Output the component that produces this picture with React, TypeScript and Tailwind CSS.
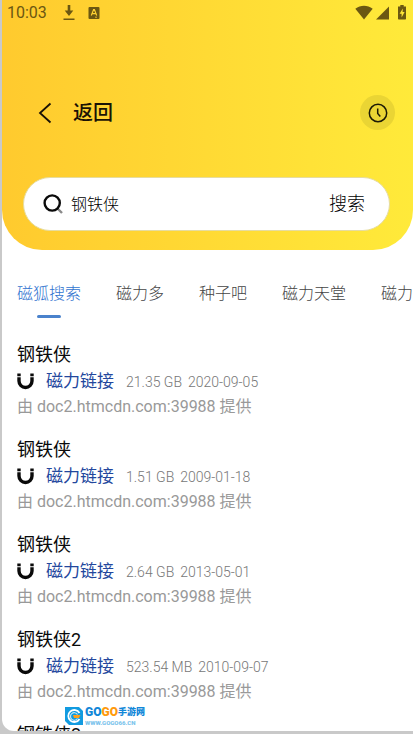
import { useState } from "react";

const TABS = ["磁狐搜索", "磁力多", "种子吧", "磁力天堂", "磁力"];

const RESULTS = [
  { title: "钢铁侠", size: "21.35 GB", date: "2020-09-05" },
  { title: "钢铁侠", size: "1.51 GB", date: "2009-01-18" },
  { title: "钢铁侠", size: "2.64 GB", date: "2013-05-01" },
  { title: "钢铁侠2", size: "523.54 MB", date: "2010-09-07" },
];

function StatusBar() {
  return (
    <div className="flex h-[25px] items-center pl-[5px] pr-[7px] text-[#6b5712]">
      <span className="text-base leading-6">10:03</span>
      <svg className="ml-4 h-4 w-3" viewBox="0 0 12 16" fill="currentColor">
        <path d="M4.700 0h2.600v5.500h3L6 11 1.700 5.500h3zM.5 13.500h11V15H.5z" />
      </svg>
      <svg className="ml-[13px] h-3 w-3" viewBox="0 0 12 12">
        <rect x="0.500" width="11" height="12" rx="1" fill="currentColor" />
        <path
          d="M3.300 8.500 5.600 2.500h.8l2.300 6M4.200 6.700h3.600"
          fill="none"
          stroke="#ffd233"
          strokeWidth="1.200"
        />
        <path d="M7 10.200h2" stroke="#ffd233" strokeWidth="0.800" />
      </svg>
      <div className="ml-auto flex items-center">
        <svg className="h-4 w-[18px]" viewBox="0 0 18 16" fill="currentColor">
          <path d="M9 14.500.3 3.700C5.500-.2 12.500-.2 17.700 3.700z" />
        </svg>
        <svg className="ml-[3px] h-4 w-[13px]" viewBox="0 0 13 16" fill="currentColor">
          <path d="M13 1.500v13H0z" />
        </svg>
        <svg className="ml-[9px] h-4 w-2" viewBox="0 0 8 16">
          <path
            d="M2.300 0h3.400v1.500H8v12.300q0 .7-.7.7H.7q-.7 0-.7-.7V1.500h2.300z"
            fill="currentColor"
          />
          <path d="M4.800 3.500 1.600 8.700h2v3.800l3-5.400h-2z" fill="#ffe637" />
        </svg>
      </div>
    </div>
  );
}

function MagnetIcon() {
  return (
    <svg className="h-[17px] w-[17px]" viewBox="0 0 17 17" fill="none" stroke="#0a0a0a">
      <path d="M2 4.200V8a6.500 6.500 0 0 0 13 0V4.200" strokeWidth="3.400" />
      <path d="M.3 1.800h3.400M13.300 1.800h3.400" strokeWidth="2.800" />
    </svg>
  );
}

function Watermark() {
  return (
    <div className="absolute bottom-[5px] left-[63px] flex items-center gap-[2px]">
      <svg className="h-[18px] w-[18px]" viewBox="0 0 18 18">
        <path d="M0 0h14l4 4v14H4l-4-4z" fill="#129be0" />
        <path
          d="M14.500 6A6 6 0 1 0 14.500 12"
          fill="none"
          stroke="#fff"
          strokeWidth="1.800"
        />
        <path d="M12.500 7.500a3.800 3.800 0 1 0 0 4" fill="none" stroke="#bfe6fa" strokeWidth="1.200" />
        <path d="M8 8h7.500l-1.500 3H9z" fill="#ff9f1a" />
      </svg>
      <div className="font-['Liberation_Sans_Narrow',Roboto,'Noto_Sans_CJK_SC',sans-serif] font-black">
        <div className="flex h-[14px] items-center text-xs leading-[14px]">
          <span className="text-[#1287d8]">GO</span>
          <span className="text-[#ff9a0c]">GO</span>
          <span className="text-[9px] text-[#1287d8]">手游网</span>
        </div>
        <div className="text-[6px] leading-[7px] text-[#7cc4ec]">WWW.GOGO66.CN</div>
      </div>
    </div>
  );
}

export default function App() {
  const [query, setQuery] = useState("钢铁侠");
  const [active, setActive] = useState(0);

  return (
    <div className="h-screen bg-[#c9c9c9] pb-[3px] pl-[2px] font-[Roboto,'Noto_Sans_CJK_SC',sans-serif]">
      <div className="relative h-full overflow-hidden rounded-bl-xl bg-white">
        {/* header */}
        <header className="rounded-b-[40px] bg-linear-to-r from-[#ffca2e] to-[#ffea3a] pb-[19px]">
          <StatusBar />

          <div className="flex items-center pl-9 pr-[18px] pt-[70px]">
            <button type="button" aria-label="后退" className="h-[22px] w-[14px]">
              <svg className="h-[22px] w-[14px]" viewBox="0 0 14 22" fill="none" stroke="#1a1205">
                <path d="M12.500 1.500 2 11l10.500 9.500" strokeWidth="1.800" />
              </svg>
            </button>
            <h1 className="ml-[21px] text-xl font-medium text-[#1a1205]">返回</h1>
            <button
              type="button"
              aria-label="历史"
              className="ml-auto flex h-[35px] w-[35px] items-center justify-center rounded-full bg-[#ead534]"
            >
              <svg className="h-5 w-5" viewBox="0 0 20 20" fill="none" stroke="#1c1a06">
                <circle cx="10" cy="10" r="8.700" strokeWidth="1.500" />
                <path d="M9.700 5.500v5l2.600 3" strokeWidth="1.500" />
              </svg>
            </button>
          </div>

          <form
            onSubmit={(e) => e.preventDefault()}
            className="ml-[21px] mr-[23px] mt-[47px] flex h-[54px] items-center rounded-full border border-[#e6dca0] bg-white pl-[19px] pr-6"
          >
            <svg className="h-5 w-5 shrink-0" viewBox="0 0 20 20" fill="none">
              <path d="m14.500 14.500 4.500 4.500" stroke="#8a8a8a" strokeWidth="2.400" />
              <circle cx="9.200" cy="9" r="7.600" stroke="#0a0a0a" strokeWidth="2.400" />
            </svg>
            <input
              type="text"
              aria-label="搜索内容"
              value={query}
              onChange={(e) => setQuery(e.target.value)}
              className="ml-2 min-w-0 flex-1 pt-[2px] text-base font-light text-black focus:outline-none"
            />
            <button type="submit" className="text-lg font-light text-black">
              搜索
            </button>
          </form>
        </header>

        {/* source tabs */}
        <nav className="flex gap-[35px] overflow-hidden pl-[15px] pt-8">
          {TABS.map((tab, i) => (
            <button
              key={tab}
              type="button"
              onClick={() => setActive(i)}
              className={`flex shrink-0 flex-col items-center text-base font-light ${
                i === active ? "text-[#2f73cf]" : "text-[#444]"
              }`}
            >
              {tab}
              <span
                className={`mt-[9px] h-[3px] w-6 rounded-full ${
                  i === active ? "bg-[#4a82cc]" : "bg-transparent"
                }`}
              />
            </button>
          ))}
        </nav>

        {/* results */}
        <ul className="flex flex-col gap-[17px] pl-[15px] pt-[23px]">
          {RESULTS.map((item) => (
            <li key={item.date}>
              <h2 className="text-lg leading-7 text-[#0a0a0a]">{item.title}</h2>
              <div className="flex h-[25px] items-center">
                <MagnetIcon />
                <a href="#" className="ml-3 text-[17px] leading-[25px] text-[#23479d]">
                  磁力链接
                </a>
                <span className="ml-3 text-sm font-light text-[#777]">{item.size}</span>
                <span className="ml-[6px] text-sm font-light text-[#777]">{item.date}</span>
              </div>
              <p className="text-base leading-[25px] text-[#999]">由 doc2.htmcdn.com:39988 提供</p>
            </li>
          ))}
          <li>
            <h2 className="text-lg leading-7 text-[#0a0a0a]">钢铁侠2</h2>
          </li>
        </ul>

        <Watermark />
      </div>
    </div>
  );
}
